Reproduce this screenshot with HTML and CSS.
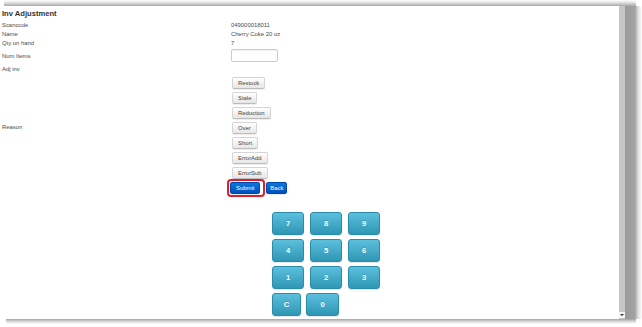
FILE: index.html
```html
<!DOCTYPE html>
<html lang="en">
<head>
    <meta charset="UTF-8">
    <meta name="viewport" content="width=device-width, initial-scale=1.0">
    <title>Inv Adjustment</title>
    <link rel="stylesheet" href="styles.css">
</head>
<body>
    <div class="screen">
        <div class="shade-top"></div>
        <div class="window">
            <div class="page">
                <h1>Inv Adjustment</h1>

                <div class="details">
                    <div class="label">Scancode</div>
                    <div class="value">049000018011</div>

                    <div class="label">Name</div>
                    <div class="value">Cherry Coke 20 oz</div>

                    <div class="label">Qty on hand</div>
                    <div class="value">7</div>

                    <div class="label label-input">Num Items</div>
                    <div class="value value-input"><input type="text" class="num-input"></div>

                    <div class="label label-adj">Adj inv</div>
                    <div class="value value-adj"></div>

                    <div class="label label-reason">Reason</div>
                    <div class="value reasons">
                        <div><button class="btn">Restock</button></div>
                        <div><button class="btn">Stale</button></div>
                        <div><button class="btn">Reduction</button></div>
                        <div><button class="btn">Over</button></div>
                        <div><button class="btn">Short</button></div>
                        <div><button class="btn">ErrorAdd</button></div>
                        <div><button class="btn">ErrorSub</button></div>
                    </div>

                    <div class="label"></div>
                    <div class="value actions">
                        <span class="highlight"><button class="btn btn-primary">Submit</button></span>
                        <button class="btn btn-primary btn-back">Back</button>
                    </div>
                </div>

                <div class="keypad">
                    <div class="keypad-row">
                        <button class="key">7</button>
                        <button class="key">8</button>
                        <button class="key">9</button>
                    </div>
                    <div class="keypad-row">
                        <button class="key">4</button>
                        <button class="key">5</button>
                        <button class="key">6</button>
                    </div>
                    <div class="keypad-row">
                        <button class="key">1</button>
                        <button class="key">2</button>
                        <button class="key">3</button>
                    </div>
                    <div class="keypad-row keypad-last">
                        <button class="key key-clear">C</button>
                        <button class="key key-zero">0</button>
                    </div>
                </div>
            </div>
            <div class="scrollbar">
                <span class="scroll-arrow"></span>
            </div>
            <div class="shade-right"></div>
        </div>
        <div class="shade-bottom"></div>
    </div>
</body>
</html>
```

FILE: styles.css
```css
* {
    margin: 0;
    padding: 0;
    box-sizing: border-box;
    font-family: "Liberation Sans", Arial, sans-serif;
}

body {
    background-color: #fff;
}

.screen {
    width: 642px;
    height: 327px;
    overflow: hidden;
}

/* window shadow around the screenshot */
.shade-top {
    height: 6px;
    margin-left: 4px;
    margin-right: 6px;
    background: linear-gradient(to bottom, #fff 0, #e4e4e4 40%, #a8a8a8 100%);
}

.window {
    display: flex;
    height: 313px;
}

.page {
    width: 619px;
    padding: 3px 0 0 2px;
    background: #fff;
}

.scrollbar {
    width: 6px;
    background: #c6c6c6;
    display: flex;
    flex-direction: column;
    justify-content: flex-end;
    padding-bottom: 1px;
}

.scroll-arrow {
    display: block;
    height: 6px;
    background: #f4f4f4;
    position: relative;
}

.scroll-arrow::after {
    content: "";
    position: absolute;
    left: 1px;
    top: 2px;
    border-left: 2px solid transparent;
    border-right: 2px solid transparent;
    border-top: 2px solid #333;
}

.shade-right {
    width: 17px;
    background: linear-gradient(to right, #9a9a9a 0, #a2a2a2 10px, #dcdcdc 13px, #fff 17px);
}

.shade-bottom {
    height: 5px;
    margin-left: 6px;
    margin-right: 6px;
    background: linear-gradient(to bottom, #a4a4a4 0, #d8d8d8 50%, #fff 100%);
}

/* content */
h1 {
    font-size: 7.6px;
    line-height: 9px;
    font-weight: bold;
    color: #333;
    margin-bottom: 2.5px;
}

.details {
    display: grid;
    grid-template-columns: 229px 1fr;
    font-size: 5.9px;
    line-height: 9px;
    color: #4a4a4a;
}

.label,
.value {
    display: flex;
    align-items: center;
}

.value-input {
    height: 15px;
}

.label-input {
    padding-top: 3px;
}

.value-adj {
    height: 13px;
}

.num-input {
    width: 47px;
    height: 13px;
    border: 1px solid #ccc;
    border-radius: 2px;
    box-shadow: inset 0 1px 1px rgba(0, 0, 0, 0.06);
    background: #fff;
}

.reasons {
    flex-direction: column;
    align-items: flex-start;
    gap: 3px;
    padding: 1px 0 1px 1px;
}

.btn {
    height: 12px;
    padding: 0 5px;
    font-size: 5.9px;
    color: #444;
    background: linear-gradient(to bottom, #fff 0, #e6e6e6 100%);
    border: 1px solid #d4d4d4;
    border-bottom-color: #bcbcbc;
    border-radius: 2px;
    box-shadow: 0 1px 1px rgba(0, 0, 0, 0.08);
    cursor: pointer;
}

.actions {
    margin-top: -1px;
}

.highlight {
    display: inline-flex;
    margin-left: -4px;
    padding: 1px 3px 1px 1px;
    border: 2px solid #e01e2a;
    border-radius: 4px;
}

.btn-primary {
    color: #fff;
    background: linear-gradient(to bottom, #0a78e0 0, #0050bc 100%);
    border-color: #0048a8;
}

.btn-primary.btn-back {
    margin-left: 1px;
    padding: 0 3px;
}

.keypad {
    margin: 15px 0 0 270px;
    display: flex;
    flex-direction: column;
    gap: 4px;
}

.keypad-row {
    display: flex;
    gap: 6px;
}

.keypad-last {
    gap: 5px;
}

.key {
    width: 32px;
    height: 23px;
    font-size: 7.6px;
    font-weight: bold;
    color: #fff;
    text-shadow: 0 -1px 0 rgba(0, 0, 0, 0.15);
    background: linear-gradient(to bottom, #5bc0de 0, #2f96b4 100%);
    border: 1px solid #2a8bab;
    border-radius: 3px;
    box-shadow: 0 1px 1px rgba(0, 0, 0, 0.1);
    cursor: pointer;
}

.key-clear {
    width: 29px;
}

.key-zero {
    width: 33px;
}
```
